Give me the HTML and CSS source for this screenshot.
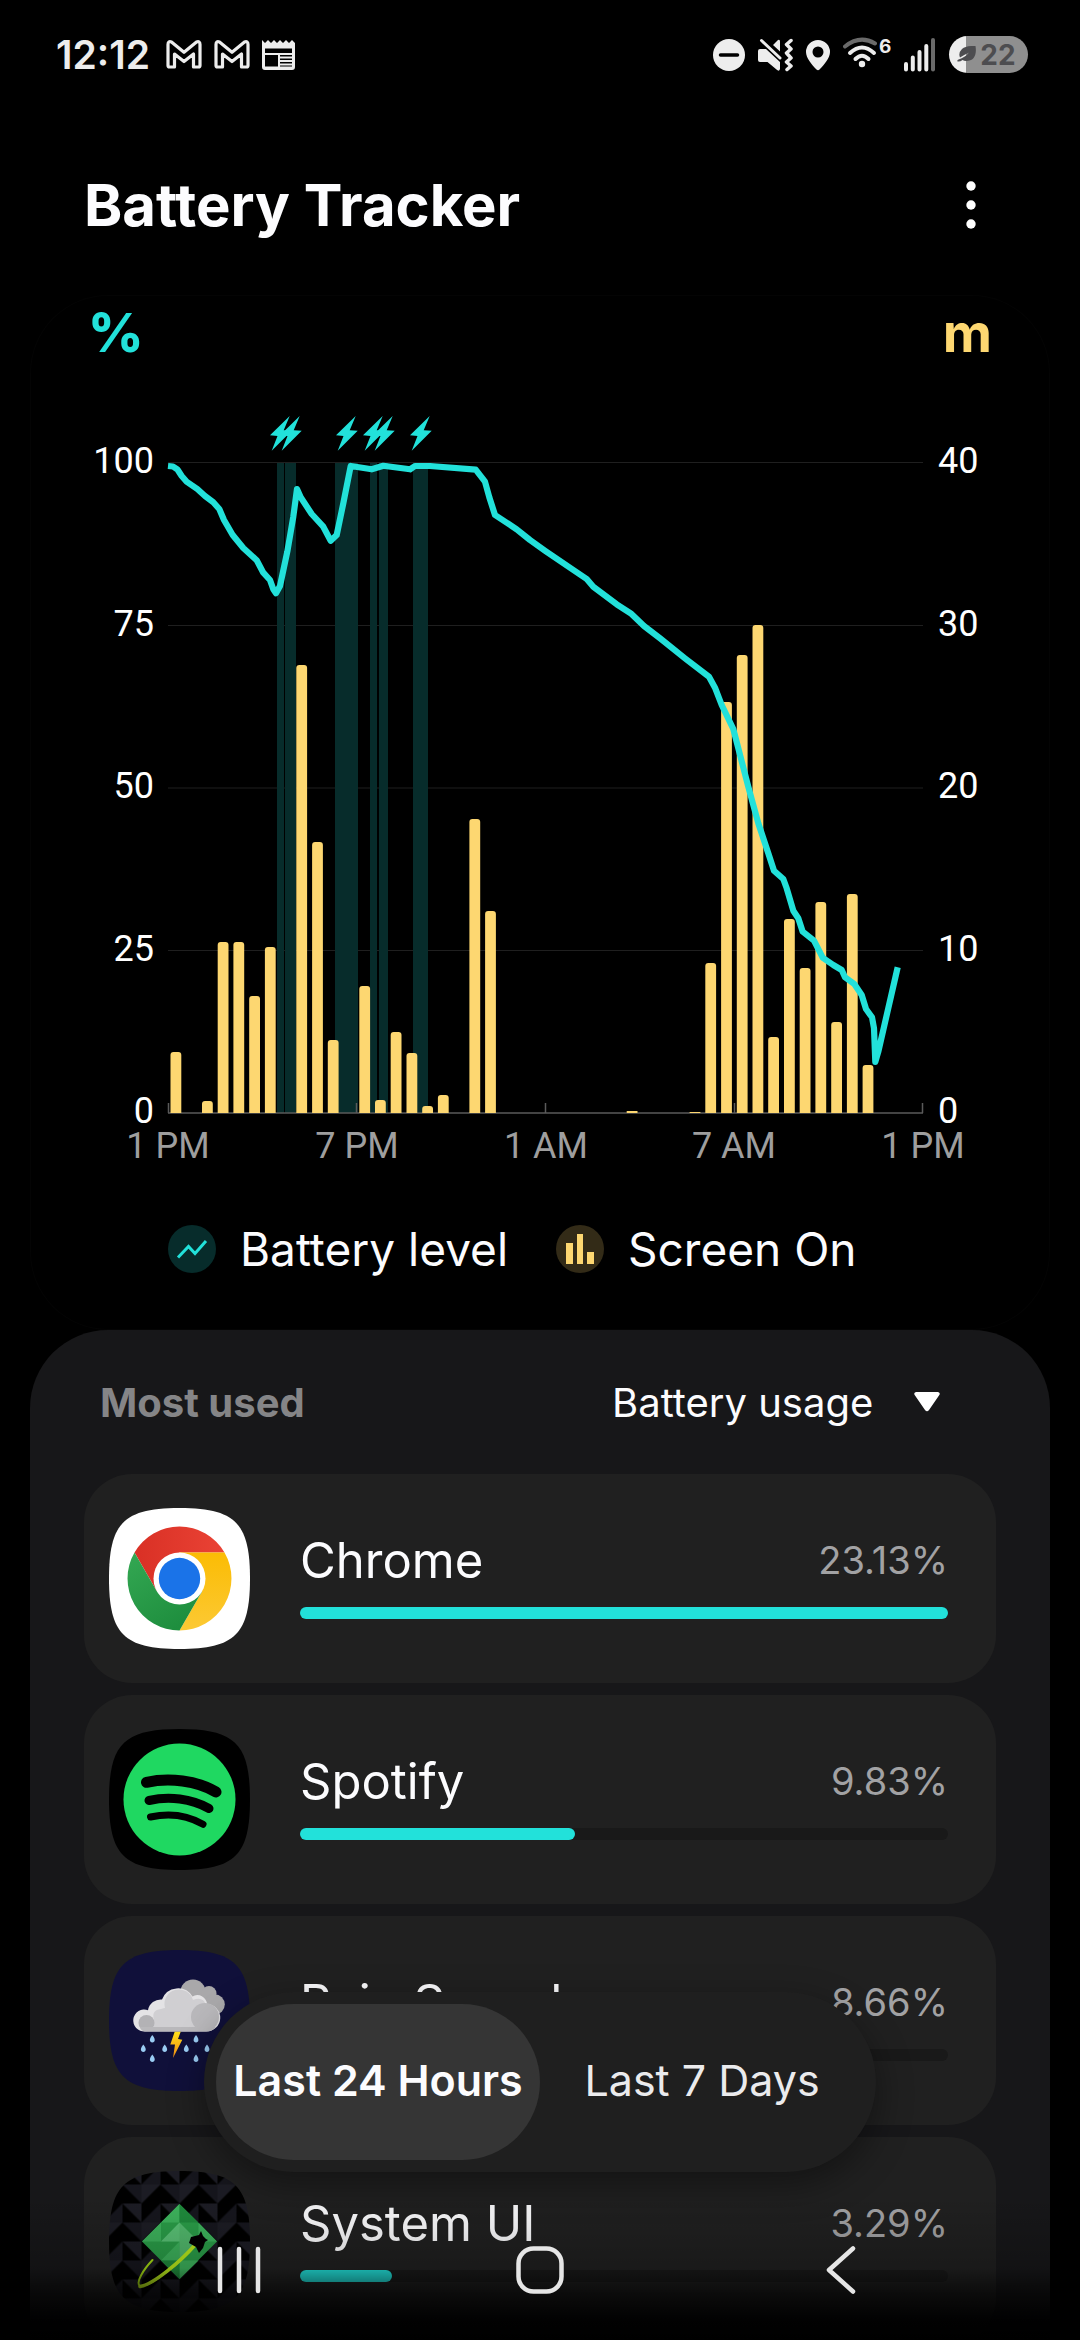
FILE: index.html
```html
<!DOCTYPE html>
<html lang="en">
<head>
  <meta charset="UTF-8" />
  <meta name="viewport" content="width=device-width, initial-scale=1" />
  <title>Battery Tracker</title>
  <link rel="stylesheet" href="styles.css">
</head>
<body>
  <div class="app">
    <div class="status-bar">
      <div class="status-left">
        <span class="clock">12:12</span>
        <svg class="status-icon" width="36" height="29" viewBox="0 0 36 29" fill="none" stroke="#ededed" stroke-width="3.2" stroke-linejoin="round">
          <path d="M2 4.500V25.500Q2 27 3.500 27H8.500V14L18 21.500L27.500 14V27H32.500Q34 27 34 25.500V4.500Q34 0.800 30.500 2L18 12.300L5.500 2Q2 0.800 2 4.500Z" />
        </svg>
        <svg class="status-icon" width="36" height="29" viewBox="0 0 36 29" fill="none" stroke="#ededed" stroke-width="3.2" stroke-linejoin="round">
          <path d="M2 4.500V25.500Q2 27 3.500 27H8.500V14L18 21.500L27.500 14V27H32.500Q34 27 34 25.500V4.500Q34 0.800 30.500 2L18 12.300L5.500 2Q2 0.800 2 4.500Z" />
        </svg>
        <svg class="status-icon" width="33" height="30" viewBox="0 0 33 30">
          <path fill="#ededed" d="M0 0L3 3L6 0L9 3L12 0L15 3L18 0L21 3L24 0L27 3L30 0L33 3V27Q33 30 30 30H3Q0 30 0 27Z" />
          <path fill="#000" d="M3 8.500H30V13H3ZM3 15H16V26.500H3ZM18 15H30V16.500H18ZM18 18.500H30V20H18ZM18 22H30V23.500H18ZM18 25.500H30V26.500H18Z" />
        </svg>
      </div>
      <div class="status-right">
        <svg width="32" height="37" viewBox="0 0 32 37">
          <circle cx="16" cy="19" r="16" fill="#ededed" />
          <path d="M7.500 19H24.500" stroke="#000" stroke-width="3.500" stroke-linecap="round" />
        </svg>
        <svg width="35" height="37" viewBox="0 0 35 37">
          <path fill="#ededed" d="M0 15Q0 13 2 13H8L22 26V33Q21 36 18.500 33.500L9.500 26H2Q0 26 0 24ZM15 9L20 4Q22 3 22 5.500V15.500Z" />
          <path d="M3.500 4.500L22 22" fill="none" stroke="#ededed" stroke-width="3" stroke-linecap="round" />
          <path d="M33 4.500L28.500 8.500L33 13L28.500 17L33 22L28.500 26L33 30L29 33.500" fill="none" stroke="#ededed" stroke-width="3.500" stroke-linecap="round" stroke-linejoin="round" />
        </svg>
        <svg width="24" height="37" viewBox="0 0 24 37">
          <path fill="#ededed" fill-rule="evenodd" d="M12 4A12 12 0 0 1 24 16C24 22 18 29 13.500 33.500Q12 35 10.500 33.500C6 29 0 22 0 16A12 12 0 0 1 12 4ZM12 10.500A5.500 5.500 0 1 0 12 21.500A5.500 5.500 0 1 0 12 10.500Z" />
        </svg>
        <svg width="48" height="37" viewBox="0 0 48 37" fill="none" stroke-linecap="round" stroke-width="4">
          <path d="M2 10.500Q17 -1.500 32 7.500" stroke="#6a6a6a" />
          <path d="M7 17Q19 6 31 17" stroke="#ededed" />
          <path d="M12.500 23Q19 16.500 25.500 23" stroke="#ededed" />
          <circle cx="19" cy="28" r="3.200" fill="#ededed" />
          <text class="wifi-gen" x="36" y="17">6</text>
        </svg>
        <svg width="32" height="37" viewBox="0 0 32 37" fill="none" stroke="#ededed" stroke-width="4" stroke-linecap="round">
          <path d="M2 28V33.500M8.800 21.500V33.500M15.500 16V33.500M22.300 10V33.500" />
          <path d="M29 4V33.500" stroke="#6a6a6a" />
        </svg>
        <div class="battery">
          <svg width="19" height="17" viewBox="0 0 19 17">
            <path fill="#4d4d50" d="M18.500 0C20 9 17 15 9 15Q7 15 5.500 14Q3 16 0.500 15.500Q0 14.500 1 13.800Q9 11 12 6.500Q6 9.500 3 11.500Q1 7 5 3Q9 -0.500 18.500 0Z" />
          </svg>
          <span>22</span>
        </div>
      </div>
    </div>

    <header class="header">
      <h1>Battery Tracker</h1>
      <button class="btn-menu" type="button" aria-label="More options">
        <svg width="10" height="48" viewBox="0 0 10 48" fill="#fff">
          <circle cx="5" cy="5" r="4.700" />
          <circle cx="5" cy="24" r="4.700" />
          <circle cx="5" cy="43" r="4.700" />
        </svg>
      </button>
    </header>

    <section class="chart-card">
      <div class="units">
        <span class="unit-percent">%</span>
        <span class="unit-minutes">m</span>
      </div>

      <svg class="chart" viewBox="0 0 1020 780" role="img" aria-label="Battery level and screen on time">
        <defs>
          <path id="bolt" d="M19.700 0L0 19.300L7.500 20L1.700 34.700L21.700 14.700L13.700 14.300Z" />
          <clipPath id="plot"><rect x="138" y="0" width="755" height="713" /></clipPath>
        </defs>

        <!-- grid -->
        <g stroke="#fff" stroke-opacity="0.12">
          <path d="M138 62.500H893M138 225.500H893M138 388H893M138 550.500H893" />
        </g>

        <!-- charging periods -->
        <g fill="#072c2b">
          <rect x="247" y="63" width="7" height="650" />
          <rect x="255" y="63" width="11" height="650" />
          <rect x="305" y="63" width="23" height="650" />
          <rect x="340" y="63" width="7" height="650" />
          <rect x="349" y="63" width="9" height="650" />
          <rect x="383" y="63" width="15" height="650" />
        </g>
        <g fill="#22e1da">
          <use href="#bolt" x="240" y="16" />
          <use href="#bolt" x="250" y="16" />
          <use href="#bolt" x="306" y="16" />
          <use href="#bolt" x="333" y="16" />
          <use href="#bolt" x="343" y="16" />
          <use href="#bolt" x="380" y="16" />
        </g>

        <!-- axis -->
        <path d="M138 713H893M138.500 703V713M326.500 703V713M515.500 703V713M704.500 703V713M892.500 703V713" fill="none" stroke="#5a5a5a" stroke-width="1.500" />

        <!-- screen on bars, one per half hour -->
        <g fill="#fdd771" clip-path="url(#plot)">
          <rect x="140.500" y="652" width="10.800" height="70" rx="3" />
          <rect x="172" y="701" width="10.800" height="20" rx="3" />
          <rect x="187.700" y="542" width="10.800" height="180" rx="3" />
          <rect x="203.400" y="542" width="10.800" height="180" rx="3" />
          <rect x="219.200" y="596" width="10.800" height="130" rx="3" />
          <rect x="234.900" y="547" width="10.800" height="180" rx="3" />
          <rect x="266.300" y="265" width="10.800" height="460" rx="3" />
          <rect x="282.100" y="442" width="10.800" height="280" rx="3" />
          <rect x="297.800" y="640" width="10.800" height="80" rx="3" />
          <rect x="329.300" y="586" width="10.800" height="140" rx="3" />
          <rect x="345" y="700" width="10.800" height="20" rx="3" />
          <rect x="360.700" y="632" width="10.800" height="90" rx="3" />
          <rect x="376.500" y="653" width="10.800" height="70" rx="3" />
          <rect x="392.200" y="706" width="10.800" height="20" rx="3" />
          <rect x="407.900" y="695" width="10.800" height="30" rx="3" />
          <rect x="439.400" y="419" width="10.800" height="300" rx="3" />
          <rect x="455.100" y="511" width="10.800" height="210" rx="3" />
          <rect x="596.700" y="711" width="10.800" height="2" />
          <rect x="659.600" y="712" width="10.800" height="1" />
          <rect x="675.300" y="563" width="10.800" height="160" rx="3" />
          <rect x="691.100" y="302" width="10.800" height="420" rx="3" />
          <rect x="706.800" y="255" width="10.800" height="470" rx="3" />
          <rect x="722.500" y="225" width="10.800" height="500" rx="3" />
          <rect x="738.200" y="637" width="10.800" height="90" rx="3" />
          <rect x="754" y="519" width="10.800" height="200" rx="3" />
          <rect x="769.700" y="568" width="10.800" height="160" rx="3" />
          <rect x="785.400" y="502" width="10.800" height="220" rx="3" />
          <rect x="801.200" y="622" width="10.800" height="100" rx="3" />
          <rect x="816.900" y="494" width="10.800" height="230" rx="3" />
          <rect x="832.600" y="665" width="10.800" height="60" rx="3" />
        </g>

        <!-- battery level -->
        <polyline fill="none" stroke="#22e1da" stroke-width="6.200" stroke-linejoin="round" points="138,66 143,66.500 147.300,69.300 151.700,76 156.700,81.700 167.300,89 175,96 183.300,102.300 189.300,109 194,120 202.700,135 213.300,148 226.700,160.300 233.300,172.700 240,180 243.300,189.300 246,193.300 250,186 257.300,151.700 263.300,116.700 267,89 270.700,97.300 281.700,114 293.300,126.700 300.700,140.700 306.700,135 313.300,103.300 320.700,66 341.700,69.300 353.300,65.800 380,69.300 385,66 400,66 445.700,69.700 455,81.700 459.300,97.300 465,115 486.700,129.300 500,140 515,150.700 539.300,167.300 556.700,179 563.300,186.700 586.700,204.300 600.700,213.300 614,226 630,238.300 655,258.300 679,276.700 685,287.700 691.700,305 703.300,329 708.300,348.300 718.300,386.700 728.300,423.300 738.300,453.300 744,470.700 753.300,479 756.700,488.300 763.300,510.700 768.300,518.300 772.700,531.700 784,540.700 792.700,557.700 803.300,565 811.700,570 815,577.300 824.300,584 831.700,595 836,609 842,617.300 844,628.300 845.300,662 848.300,651.700 867.700,567.300" />

        <g class="axis-y axis-left">
          <text x="124" y="73">100</text>
          <text x="124" y="236">75</text>
          <text x="124" y="398">50</text>
          <text x="124" y="561">25</text>
          <text x="124" y="723">0</text>
        </g>
        <g class="axis-y">
          <text x="908" y="73">40</text>
          <text x="908" y="236">30</text>
          <text x="908" y="398">20</text>
          <text x="908" y="561">10</text>
          <text x="908" y="723">0</text>
        </g>
        <g class="axis-x">
          <text x="138" y="758">1 PM</text>
          <text x="327" y="758">7 PM</text>
          <text x="516" y="758">1 AM</text>
          <text x="704" y="758">7 AM</text>
          <text x="893" y="758">1 PM</text>
        </g>
      </svg>

      <div class="legend">
        <div class="legend-item">
          <svg width="48" height="48" viewBox="0 0 48 48">
            <circle cx="24" cy="24" r="24" fill="#072c2b" />
            <path d="M10 32.500L20.500 21.500L27 28.500L38 16" fill="none" stroke="#22e1da" stroke-width="3" />
          </svg>
          <span>Battery level</span>
        </div>
        <div class="legend-item">
          <svg width="48" height="48" viewBox="0 0 48 48">
            <circle cx="24" cy="24" r="24" fill="#332b17" />
            <path d="M10 18H17V39H10ZM21 9H27V39H21ZM31 27H38V39H31Z" fill="#fdd771" />
          </svg>
          <span>Screen On</span>
        </div>
      </div>
    </section>

    <section class="usage-card">
      <div class="usage-header">
        <h2>Most used</h2>
        <div class="sort">
          <select class="sort-select" aria-label="Sort by">
            <option>Battery usage</option>
            <option>Screen time</option>
          </select>
          <svg class="sort-arrow" width="26" height="20" viewBox="0 0 26 20">
            <path d="M2 0H24Q27 1 25 3.500L15 18Q13 20.500 11 18L1 3.500Q-1 1 2 0Z" fill="#fff" />
          </svg>
        </div>
      </div>

      <ul class="app-list">
        <li class="app-row">
          <svg class="app-icon" viewBox="0 0 141 141">
            <defs>
              <path id="squircle" d="M70.500 0C126 0 141 15 141 70.500S126 141 70.500 141S0 126 0 70.500S15 0 70.500 0Z" />
              <clipPath id="squircle-clip"><use href="#squircle" /></clipPath>
              <linearGradient id="chrome-red"><stop offset="0" stop-color="#d93025" /><stop offset="1" stop-color="#ea4335" /></linearGradient>
              <linearGradient id="chrome-yellow" x2="0" y2="1"><stop offset="0" stop-color="#fbbc04" /><stop offset="1" stop-color="#fcc934" /></linearGradient>
              <linearGradient id="chrome-green" x2="0.600" y2="1"><stop offset="0" stop-color="#34a853" /><stop offset="1" stop-color="#1e8e3e" /></linearGradient>
            </defs>
            <use href="#squircle" fill="#fff" />
            <path fill="url(#chrome-red)" d="M25.500 44.500A52 52 0 0 1 115.500 44.500H70.500L48 83.500Z" />
            <path fill="url(#chrome-yellow)" d="M115.500 44.500A52 52 0 0 1 70.500 122.500L93 83.500L70.500 44.500Z" />
            <path fill="url(#chrome-green)" d="M70.500 122.500A52 52 0 0 1 25.500 44.500L48 83.500H93Z" />
            <circle cx="70.500" cy="70.500" r="26" fill="#fff" />
            <circle cx="70.500" cy="70.500" r="20.700" fill="#1a73e8" />
          </svg>
          <div class="app-info">
            <div class="app-line"><span class="app-name">Chrome</span><span class="app-percent">23.13%</span></div>
            <div class="meter"><div class="meter-fill" style="width: 100%"></div></div>
          </div>
        </li>
        <li class="app-row">
          <svg class="app-icon" viewBox="0 0 141 141">
            <use href="#squircle" fill="#000" />
            <circle cx="70.500" cy="70.500" r="56" fill="#1fd861" />
            <g fill="none" stroke="#000" stroke-linecap="round">
              <path stroke-width="11" d="M37.500 53.300C60 48.500 88 51.500 107 63" />
              <path stroke-width="9" d="M40 71.500C60 67 82 69.500 100 79.500" />
              <path stroke-width="7" d="M41.500 88C60 84 78 86 94 95.300" />
            </g>
          </svg>
          <div class="app-info">
            <div class="app-line"><span class="app-name">Spotify</span><span class="app-percent">9.83%</span></div>
            <div class="meter"><div class="meter-fill" style="width: 42.5%"></div></div>
          </div>
        </li>
        <li class="app-row">
          <svg class="app-icon" viewBox="0 0 141 141">
            <defs>
              <path id="drop" d="M0 -4Q3.500 0 2 2.500Q0 4.500 -2 2.500Q-3.500 0 0 -4Z" />
              <linearGradient id="flash" x2="0" y2="1"><stop offset="0" stop-color="#ffe11a" /><stop offset="1" stop-color="#f08a12" /></linearGradient>
            </defs>
            <use href="#squircle" fill="#10103a" />
            <g fill="#a9a8aa">
              <circle cx="84" cy="42.300" r="12.700" />
              <circle cx="100" cy="43.500" r="7.500" />
              <circle cx="105.500" cy="54.500" r="10.300" />
            </g>
            <path fill="#e4e3e5" d="M36 81.500A11 11 0 1 1 39 60.200A13 13 0 0 1 53 49.500A17 17 0 0 1 83.500 46.500A9.500 9.500 0 0 1 98 54A13.700 13.700 0 0 1 97 81.500Z" />
            <path fill="#d0cfd2" d="M45 77V70Q42 60 52 59Q55 58 56 58A14.500 14.500 0 0 1 84 50Q94 46 97 55V77Z" />
            <circle cx="96" cy="67" r="14" fill="#b9b8bb" />
            <circle cx="37.500" cy="73" r="8" fill="#b3b2b5" />
            <path fill="#b9b8bb" d="M31 77H107Q103 81.500 97 81.500H36Q32 81 31 77Z" />
            <path fill="url(#flash)" d="M65.700 81.700H71.700L69 89L73.300 89.700L64 108L66 94.500H61.300Z" />
            <g fill="#9accf3">
              <use href="#drop" x="43.300" y="89" />
              <use href="#drop" x="87" y="89" />
              <use href="#drop" x="34.300" y="98.500" />
              <use href="#drop" x="55.700" y="98.500" />
              <use href="#drop" x="77.300" y="98.500" />
              <use href="#drop" x="98" y="98.500" />
              <use href="#drop" x="43.300" y="108.500" />
              <use href="#drop" x="87" y="108.500" />
            </g>
          </svg>
          <div class="app-info">
            <div class="app-line"><span class="app-name">Rain Sounds</span><span class="app-percent">8.66%</span></div>
            <div class="meter"><div class="meter-fill" style="width: 37.4%"></div></div>
          </div>
        </li>
        <li class="app-row">
          <svg class="app-icon" viewBox="0 0 141 141">
            <defs>
              <pattern id="facets" x="13.500" y="13.500" width="38" height="38" patternUnits="userSpaceOnUse">
                <path fill="#16161d" d="M0 0H38V38H0Z" />
                <path fill="#1c1c24" d="M19 0H38V19H19ZM0 19H19V38H0Z" />
                <path fill="#000" d="M0 0L19 19H0ZM38 0V19H19ZM0 19L19 38H0ZM19 19H38L19 38Z" />
              </pattern>
            </defs>
            <g clip-path="url(#squircle-clip)">
              <rect width="141" height="141" fill="url(#facets)" />
            </g>
            <path fill="#2a9d48" d="M70.500 33L108 70.500L70.500 108L33 70.500Z" />
            <path fill="#3db35c" d="M70.500 33V51.500H52ZM52 51.500V70.500H33ZM89.500 51.500V70.500H108ZM70.500 51.500L52 70.500H70.500ZM52 89.500L70.500 70.500V89.500ZM70.500 89.500H89.500L70.500 108Z" />
            <path fill="#6cc985" fill-opacity="0.600" d="M70.500 51.500L89.500 70.500L70.500 89.500V70.500H52Z" />
            <path fill="#1f8a3c" d="M70.500 33V51.500H89.500ZM52 89.500H70.500V108Z" />
            <path d="M43.500 89C34 99 27 111 30.500 114.500C38 119 70 92 86 74" fill="none" stroke="#a6dc14" stroke-width="2" stroke-linecap="round" />
            <path d="M31 115.500C44 114 72 90 86 74" fill="none" stroke="#b9ea1c" stroke-width="3.500" stroke-linecap="round" />
            <path fill="#000" d="M80 72L82 66L90 64L92 60L94 65L97 68L99 69L96 71L94 77L90 82L87 76Z" />
          </svg>
          <div class="app-info">
            <div class="app-line"><span class="app-name">System UI</span><span class="app-percent">3.29%</span></div>
            <div class="meter"><div class="meter-fill" style="width: 14.2%"></div></div>
          </div>
        </li>
      </ul>
    </section>

    <div class="range-tabs">
      <button class="range-tab active" type="button">Last 24 Hours</button>
      <button class="range-tab" type="button">Last 7 Days</button>
    </div>

    <nav class="nav-bar">
      <button class="nav-btn" type="button" aria-label="Recents">
        <svg width="48" height="48" viewBox="0 0 48 48" fill="none" stroke="#e6e6e6" stroke-width="4.500" stroke-linecap="round">
          <path d="M5 3V45M24 3V45M43 3V45" />
        </svg>
      </button>
      <button class="nav-btn" type="button" aria-label="Home">
        <svg width="48" height="48" viewBox="0 0 48 48" fill="none" stroke="#e6e6e6" stroke-width="4.500">
          <rect x="2.500" y="2.500" width="43" height="43" rx="15" />
        </svg>
      </button>
      <button class="nav-btn" type="button" aria-label="Back">
        <svg width="30" height="48" viewBox="0 0 30 48" fill="none" stroke="#e6e6e6" stroke-width="4.500" stroke-linecap="round" stroke-linejoin="round">
          <path d="M27 2.500L3 24L27 45.500" />
        </svg>
      </button>
    </nav>
  </div>
</body>
</html>
```
FILE: styles.css
```css
:root {
  --accent: #22e1da;
  --yellow: #fdd771;
  --bg: #000000;
  --bg-card: #171719;
  --bg-row: #202020;
  --text: #fcfcfe;
  --text-secondary: #a2a2a4;
}

* {
  margin: 0;
  padding: 0;
  box-sizing: border-box;
}

body {
  font-family: 'Inter', sans-serif;
  background: var(--bg);
  color: var(--text);
}

button,
select {
  font: inherit;
  color: inherit;
  background: none;
  border: none;
}

svg {
  display: block;
  flex-shrink: 0;
}

.app {
  position: relative;
  height: 100vh;
  overflow: hidden;
}

/* Status bar */
.status-bar {
  display: flex;
  justify-content: space-between;
  height: 115px;
  padding: 36px 52px 0 56px;
  color: #ededed;
}

.status-left,
.status-right {
  display: flex;
  align-items: center;
  height: 37px;
}

.status-left {
  gap: 12px;
}

.status-right {
  gap: 13px;
}

.clock {
  margin-right: 4px;
  font-size: 39px;
  font-weight: 600;
}

.wifi-gen {
  font-size: 19px;
  font-weight: 700;
  fill: #ededed;
}

.battery {
  display: flex;
  align-items: center;
  justify-content: center;
  gap: 4px;
  width: 79px;
  height: 37px;
  padding-right: 4px;
  border-radius: 19px;
  background: linear-gradient(to right, #ededed 17px, #8f8f8f 17px);
  color: #4d4d50;
  font-size: 28px;
  font-weight: 700;
}

/* Header */
.header {
  display: flex;
  align-items: center;
  justify-content: space-between;
  height: 180px;
  padding: 0 84px;
}

.header h1 {
  font-size: 58px;
  font-weight: 700;
}

.btn-menu {
  display: flex;
  justify-content: center;
  width: 50px;
}

/* Chart */
.chart-card {
  margin: 0 30px;
  border-radius: 78px;
  box-shadow: inset 0 0 0 1px #040404;
}

.units {
  display: flex;
  justify-content: space-between;
  height: 105px;
  padding: 0 58px;
  font-size: 54px;
  font-weight: 700;
  line-height: 76px;
}

.unit-percent {
  color: var(--accent);
  font-weight: 800;
}

.unit-minutes {
  color: var(--yellow);
}

.chart {
  width: 100%;
  height: auto;
  font-family: 'Roboto', sans-serif;
  font-size: 36px;
}

.axis-y {
  fill: #ffffff;
}

.axis-left {
  text-anchor: end;
}

.axis-x {
  fill: #9e9e9e;
  text-anchor: middle;
}

.legend {
  display: flex;
  gap: 48px;
  height: 150px;
  padding: 0 138px 12px;
}

.legend-item {
  display: flex;
  align-items: center;
  gap: 24px;
  font-size: 46px;
  white-space: nowrap;
}

/* Most used */
.usage-card {
  margin: 0 30px;
  padding: 0 54px 54px;
  border-radius: 78px 78px 0 0;
  background: var(--bg-card);
}

.usage-header {
  display: flex;
  align-items: center;
  justify-content: space-between;
  height: 144px;
  padding: 0 56px 0 16px;
}

.usage-header h2 {
  font-size: 40px;
  font-weight: 700;
  color: #858587;
}

.sort {
  display: flex;
  align-items: center;
  gap: 40px;
}

.sort-select {
  appearance: none;
  font-size: 40px;
}

.sort-arrow {
  pointer-events: none;
}

.app-list {
  display: flex;
  flex-direction: column;
  gap: 12px;
  list-style: none;
}

.app-row {
  display: flex;
  gap: 50px;
  padding: 34px 48px 34px 25px;
  border-radius: 48px;
  background: var(--bg-row);
}

.app-icon {
  width: 141px;
  height: 141px;
}

.app-info {
  flex: 1;
  padding-top: 20px;
}

.app-line {
  display: flex;
  align-items: center;
  justify-content: space-between;
  height: 64px;
  margin-bottom: 15px;
}

.app-name {
  font-size: 49px;
}

.app-percent {
  font-size: 38px;
  color: var(--text-secondary);
}

.meter {
  height: 12px;
  border-radius: 6px;
  background: #191919;
}

.meter-fill {
  height: 100%;
  border-radius: 6px;
  background: var(--accent);
}

/* Range switch floats over the list */
.range-tabs {
  position: absolute;
  bottom: 168px;
  left: 50%;
  transform: translateX(-50%);
  display: grid;
  grid-template-columns: 1fr 1fr;
  width: 672px;
  height: 180px;
  padding: 12px;
  border-radius: 90px;
  background: #1f1f1f;
  box-shadow: 0 12px 36px rgba(0, 0, 0, 0.4);
}

.range-tab {
  padding-bottom: 4px;
  border-radius: 78px;
  font-size: 43px;
  white-space: nowrap;
  color: #ebebed;
}

.range-tab.active {
  background: #353535;
  color: var(--text);
  font-weight: 600;
}

/* System navigation */
.nav-bar {
  position: absolute;
  bottom: 0;
  left: 0;
  right: 0;
  display: grid;
  grid-template-columns: repeat(3, 1fr);
  height: 144px;
  padding: 4px 88px 0;
  background: linear-gradient(to bottom, transparent, rgba(0, 0, 0, 0.2) 50%, rgba(0, 0, 0, 0.65) 68%, rgba(0, 0, 0, 0.95) 86%, #000);
}

.nav-btn {
  display: flex;
  align-items: center;
  justify-content: center;
}
```
